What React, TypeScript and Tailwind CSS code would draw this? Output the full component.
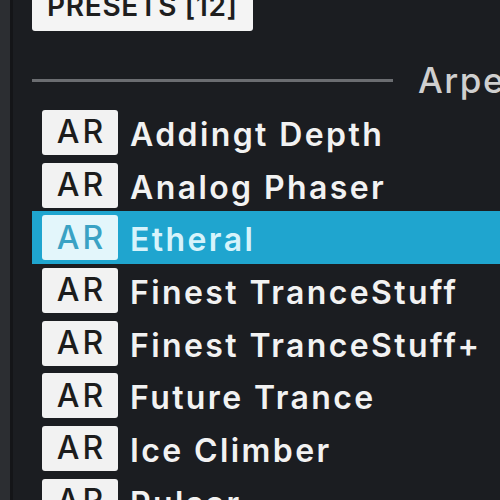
const presets = [
  "Addingt Depth",
  "Analog Phaser",
  "Etheral",
  "Finest TranceStuff",
  "Finest TranceStuff+",
  "Future Trance",
  "Ice Climber",
  "Pulsar",
];

const selected = "Etheral";

function PresetRow({ name, active }: { name: string; active: boolean }) {
  return (
    <div
      className={
        "flex h-[52.7px] shrink-0 items-center pl-[10px] " +
        (active ? "bg-[#1fa5cf]" : "")
      }
    >
      {/* type badge */}
      <span
        className={
          "flex h-[45px] w-[76px] shrink-0 items-center justify-center rounded-[3px] pl-[3px] text-[32px] font-medium leading-none tracking-[3px] " +
          (active ? "bg-[#e3f6fb] text-[#3aa2c4]" : "bg-[#f2f2f2] text-[#1c1c1c]")
        }
      >
        AR
      </span>

      {/* preset name */}
      <span
        className={
          "ml-[12px] mt-[5px] whitespace-nowrap text-[32px] font-semibold leading-none tracking-[2.4px] " +
          (active ? "text-[#d6f3fb]" : "text-[#f2f2f2]")
        }
      >
        {name}
      </span>
    </div>
  );
}

export default function App() {
  return (
    <div className="flex h-[500px] w-[500px] overflow-hidden bg-[#1b1d21] font-['Inter','Liberation_Sans',Arial,sans-serif]">
      {/* left edge strip */}
      <div className="w-[10px] shrink-0 bg-[#2c2e32]" />
      <div className="w-[3px] shrink-0 bg-[#141518]" />

      <div className="flex min-w-0 flex-1 flex-col pl-[19px]">
        {/* presets button, cut by the top edge */}
        <div className="-mt-[19px] flex h-[50px] w-[221px] shrink-0 items-end rounded-b-[3px] bg-[#f4f4f4] pb-[11px] pl-[15px] text-[28px] font-semibold leading-none tracking-[0.7px] text-[#1e1e1e]">
          PRESETS [12]
        </div>

        {/* section header */}
        <div className="mt-[29px] flex h-[40px] shrink-0 items-center">
          <div className="h-[3px] w-[361px] shrink-0 bg-[#6b6d71]" />
          <span className="ml-[25px] whitespace-nowrap text-[35px] font-medium leading-none tracking-[1.5px] text-[#cfcfcf]">
            Arpeggiator
          </span>
        </div>

        {/* preset list */}
        <div className="mt-[6px] flex flex-col">
          {presets.map((p) => (
            <PresetRow key={p} name={p} active={p === selected} />
          ))}
        </div>
      </div>
    </div>
  );
}
